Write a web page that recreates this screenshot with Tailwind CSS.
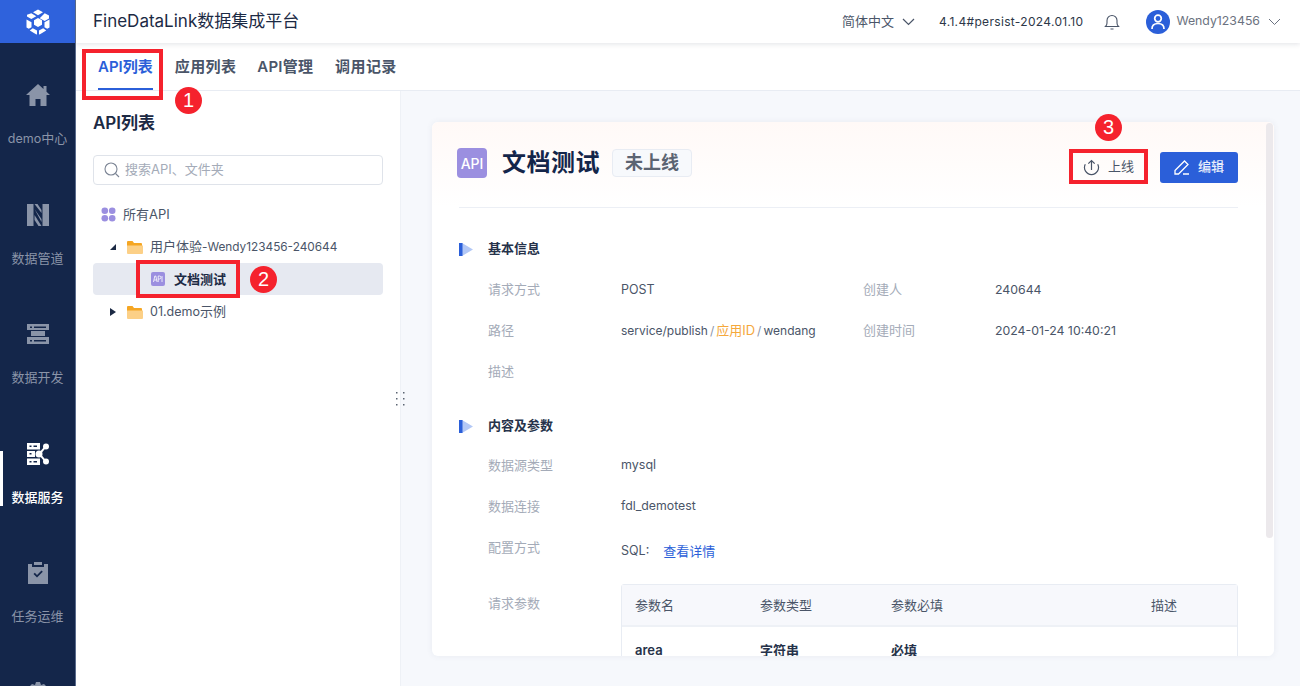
<!DOCTYPE html>
<html lang="zh-CN">
<head>
    <meta charset="UTF-8">
    <title>FineDataLink数据集成平台</title>
    <script src="https://cdn.jsdelivr.net/npm/@tailwindcss/browser@4"></script>
</head>
<body class="h-[686px] w-[1300px] overflow-hidden relative flex bg-[#f6f8fc] text-[#4a5568] font-['Inter','Noto_Sans_CJK_SC',sans-serif]">
    <!-- sidebar -->
    <aside class="w-[76px] h-full shrink-0 bg-[#14264a] border-r border-[#5a6b8c] overflow-hidden">
        <div class="h-[43px] -mr-px bg-[#2f62dc] flex items-center justify-center">
            <svg width="26" height="26" viewBox="0 0 26 26" fill="#fff"><path d="M13 0.500l5 2.800-5 2.900-5-2.900zM6.300 4.300l5 2.900-5 2.900-4.300-2.500V5.800zM19.700 4.300L24 6.600v2.900l-4.300 2.600-5-2.900zM13 9l4 2.300v4.500L13 18l-4-2.200v-4.500zM1.500 10.500l5 2.800v5l-2.700 1.500-2.300-1.300zM24.500 10.500v8l-2.300 1.300-2.700-1.500v-5zM7.800 19.200l4.200 2.400v3.900l-1-.3-6.200-3.600zM18.200 19.200l3 2.400-6.200 3.600-1 .3v-3.900z"/></svg>
        </div>
        <nav class="pt-[41px] text-[13px] leading-5 text-[#8a94a8]">
            <a class="h-[119.500px] flex flex-col items-center">
                <svg width="24" height="22" viewBox="0 0 24 22" fill="#8a94a8"><path d="M12 0L0 11h3.500v11h6v-7h5v7h6V11H24l-3.500-3.200V2h-3v3z"/></svg>
                <span class="mt-[22px]"><span class="text-[12.500px]">demo</span>中心</span>
            </a>
            <a class="h-[119.500px] flex flex-col items-center">
                <svg width="22" height="22" viewBox="0 0 22 22" fill="#8a94a8"><path d="M0 0h6.500v22H0zM15.500 0H22v22h-6.500z"/><path d="M7.500 0h3l4 6v3zM7.500 5l7 10v3zM7.500 11l7 11h-3l-4-6z"/></svg>
                <span class="mt-[22px]">数据管道</span>
            </a>
            <a class="h-[119.500px] flex flex-col items-center">
                <svg width="22" height="22" viewBox="0 0 22 22" fill="#8a94a8"><path d="M0 1h22v6H0zM4 8h14v5H4zM0 14h22v7H0z"/><path d="M3 3.500h2v1.500H3zM7 3.500h12v1.500H7zM3 17h2v1.500H3zM7 17h12v1.500H7z" fill="#14264a"/></svg>
                <span class="mt-[22px]">数据开发</span>
            </a>
            <a class="h-[119.500px] flex flex-col items-center relative text-white font-medium">
                <span class="absolute left-0 top-[8px] w-[3px] h-[55px] bg-white"></span>
                <svg width="22" height="22" viewBox="0 0 22 22" fill="#fff"><path d="M0 0h13v6.500H0zM0 8h8v6H0zM0 15.500h13V22H0z"/><circle cx="19" cy="3.500" r="3"/><circle cx="12" cy="11" r="3.500"/><circle cx="19" cy="18.500" r="3"/><path d="M12 10l6.300-7.500 1.400 1.200-6 7.300 6 7.300-1.400 1.200L12 12z"/><path d="M2.500 2.500h2v1.500h-2zM6.500 2.500h3.500v1.500H6.500zM2.500 10h2v1.500h-2zM2.500 18h2v1.500h-2zM6.500 18h3.500v1.500H6.500z" fill="#14264a"/></svg>
                <span class="mt-[22px]">数据服务</span>
            </a>
            <a class="h-[119.500px] flex flex-col items-center">
                <svg width="20" height="22" viewBox="0 0 20 22" fill="#8a94a8"><path d="M0 2h4v3h12V2h4v20H0zM6 0h8v3H6z"/><path d="M5.500 12l1.300-1.300 2.200 2.200 4.500-4.500 1.300 1.300-5.800 5.800z" fill="#14264a"/></svg>
                <span class="mt-[22px]">任务运维</span>
            </a>
            <a class="h-[119.500px] flex flex-col items-center">
                <svg width="22" height="22" viewBox="0 0 22 22" fill="#8a94a8"><path d="M9 0h4l1 3 3-1 3 3-1 3 3 1v4l-3 1 1 3-3 3-3-1-1 3H9l-1-3-3 1-3-3 1-3-3-1V9l3-1-1-3 3-3 3 1z"/></svg>
            </a>
        </nav>
    </aside>

    <div class="flex-1 flex flex-col min-w-0">
        <!-- top bar -->
        <header class="h-[43px] shrink-0 bg-white shadow-[0_1px_5px_rgba(40,50,80,0.14)] relative z-10 flex items-center pl-[17px] pr-[19px]">
            <h1 class="text-[17px] text-[#1c2a44] font-normal">FineDataLink数据集成平台</h1>
            <div class="ml-auto flex items-center text-[13px]">
                <span class="text-[#4a5568]">简体中文</span>
                <svg class="ml-[8px]" width="13" height="8" viewBox="0 0 13 8" fill="none" stroke="#4a5568" stroke-width="1.200"><path d="M1 1l5.500 5.500L12 1"/></svg>
                <span class="ml-[24px] text-[#2d3748] text-[12px] tracking-[0.33px]">4.1.4#persist-2024.01.10</span>
                <svg class="ml-[21px]" width="16" height="16" viewBox="0 0 16 16" fill="none" stroke="#4a5568" stroke-width="1.100"><path d="M1.500 12.500h13c-1-1-1.500-2-1.500-3.500V6.500a5 5 0 0 0-10 0V9c0 1.500-.5 2.500-1.500 3.500zM6.500 15h3"/></svg>
                <span class="ml-[26px] w-6 h-6 rounded-full bg-[#2b5fd9] flex items-center justify-center">
                    <svg width="16" height="18" viewBox="0 0 16 18" fill="none" stroke="#fff" stroke-width="1.700"><circle cx="8" cy="5.500" r="3.300"/><path d="M2 16c0-3.500 2.500-5.500 6-5.500s6 2 6 5.500"/></svg>
                </span>
                <span class="ml-[6px] text-[12.300px] text-[#6b7280]">Wendy123456</span>
                <svg class="ml-[8px]" width="13" height="8" viewBox="0 0 13 8" fill="none" stroke="#6b7280" stroke-width="1"><path d="M1 1l5.500 5.500L12 1"/></svg>
            </div>
        </header>

        <!-- tabs -->
        <div class="h-[48px] shrink-0 bg-white border-b border-[#e8ecf3] flex pl-[22px] gap-[22px] text-[15px] font-semibold text-[#4a5568]">
            <a class="h-[47px] pt-[14px] leading-5 text-[#2b5fd9] border-b-2 border-[#2b5fd9]">API列表</a>
            <a class="pt-[14px] leading-5 tracking-[0.4px]">应用列表</a>
            <a class="-ml-px pt-[14px] leading-5 tracking-[0.2px]">API管理</a>
            <a class="pt-[14px] leading-5 tracking-[0.4px]">调用记录</a>
        </div>

        <div class="flex-1 flex min-h-0">
            <!-- tree panel -->
            <section class="w-[325px] shrink-0 bg-white border-r border-[#eef1f6] pl-[17px] pr-[17px] relative">
                <h2 class="mt-[20px] text-[17px] leading-6 font-semibold text-[#1c2a44]">API列表</h2>
                <div class="mt-[20px] h-[30px] border border-[#dfe3ea] rounded-[4px] flex items-center pl-[10px] text-[13px] text-[#a4abb8]">
                    <svg width="16" height="16" viewBox="0 0 16 16" fill="none" stroke="#7b8494" stroke-width="1.100"><circle cx="7" cy="7" r="6"/><path d="M11.500 11.500l3.500 3.500"/></svg>
                    <span class="ml-[5px]">搜索API、文件夹</span>
                </div>
                <ul class="mt-[13px] text-[13px] text-[#4a5568]">
                    <li class="h-[33px] flex items-center pl-[8px]">
                        <svg width="15" height="15" viewBox="0 0 15 15" fill="#9b8fe0"><circle cx="3.800" cy="3.800" r="3.300"/><circle cx="11.200" cy="3.800" r="3.300"/><circle cx="3.800" cy="11.200" r="3.300"/><circle cx="11.200" cy="11.200" r="3.300"/></svg>
                        <span class="ml-[7px]">所有API</span>
                    </li>
                    <li class="h-[32px] flex items-center pl-[17px]">
                        <svg width="6" height="6" viewBox="0 0 6 6" fill="#1c2a44"><path d="M6 0v6H0z"/></svg>
                        <svg class="ml-[11px]" width="16" height="14" viewBox="0 0 16 14"><path d="M0 2a1 1 0 0 1 1-1h4.500l1.500 2h7a1 1 0 0 1 1 1v2H0z" fill="#f5a623"/><path d="M0 5.500h16V13a1 1 0 0 1-1 1H1a1 1 0 0 1-1-1z" fill="#fcd087"/></svg>
                        <span class="ml-[7px]">用户体验<span class="text-[11.800px]">-Wendy123456-240644</span></span>
                    </li>
                    <li class="h-[32px] flex items-center pl-[58px] bg-[#e6e9f1] rounded-[4px] font-semibold text-[#1c2a44]">
                        <svg width="14" height="14" viewBox="0 0 14 14"><rect width="14" height="14" rx="2" fill="#9b8fe0"/><path d="M2.500 10l1.300-6h1l1.300 6M3.100 8h2.400M7.200 10V4h1.200a1.400 1.400 0 0 1 0 3H7.200M11 4v6" fill="none" stroke="#fff" stroke-width=".8"/></svg>
                        <span class="ml-[9px] pt-px">文档测试</span>
                    </li>
                    <li class="h-[33px] flex items-center pl-[17px]">
                        <svg width="6" height="8" viewBox="0 0 6 8" fill="#1c2a44"><path d="M0 0l6 4-6 4z"/></svg>
                        <svg class="ml-[11px]" width="16" height="14" viewBox="0 0 16 14"><path d="M0 2a1 1 0 0 1 1-1h4.500l1.500 2h7a1 1 0 0 1 1 1v2H0z" fill="#f5a623"/><path d="M0 5.500h16V13a1 1 0 0 1-1 1H1a1 1 0 0 1-1-1z" fill="#fcd087"/></svg>
                        <span class="ml-[7px]"><span class="text-[12.500px]">01.demo</span>示例</span>
                    </li>
                </ul>
                <svg class="absolute left-[319px] top-[300px]" width="12" height="16" viewBox="0 0 12 16" fill="#5b6472"><rect x="1" y="1" width="1.500" height="1.500"/><rect x="8" y="1" width="1.500" height="1.500"/><rect x="1" y="7" width="1.500" height="1.500"/><rect x="8" y="7" width="1.500" height="1.500"/><rect x="1" y="13" width="1.500" height="1.500"/><rect x="8" y="13" width="1.500" height="1.500"/></svg>
            </section>

            <!-- detail card -->
            <main class="flex-1 min-w-0 pt-[31px] pl-[31px] pr-[26px] pb-[30px]">
                <div class="h-[534px] bg-white rounded-[6px] shadow-[0_0_6px_rgba(60,80,120,0.08)] relative overflow-hidden">
                    <div class="absolute right-[1px] top-[1px] w-[7px] h-[415px] rounded bg-[#ece9ec]"></div>
                    <div class="h-[85px] pl-[25px] pr-[27px] pt-[25px] bg-gradient-to-b from-[#fff9f7] to-white">
                        <div class="flex items-center">
                            <svg width="30" height="30" viewBox="0 0 30 30"><rect width="30" height="30" rx="4" fill="#9b8fe0"/><text x="15" y="21" font-size="14" font-family="Inter" font-weight="500" text-anchor="middle" fill="#fff">API</text></svg>
                            <span class="ml-[15px] text-[24px] leading-8 tracking-[0.5px] font-bold text-[#14264a]">文档测试</span>
                            <span class="ml-[12px] h-[28px] w-[80px] text-center border border-[#e8ecf3] bg-[#f7f9fc] rounded-[4px] text-[18px] leading-[26px] font-semibold text-[#5b6472]">未上线</span>
                            <div class="ml-auto flex items-center mr-[9px] translate-y-[4px]">
                                <a class="h-[31px] w-[76px] flex items-center pl-[14px] text-[13px] text-[#4a5568]">
                                    <svg class="-ml-[4px]" width="17" height="17" viewBox="0 0 17 17" fill="none" stroke="#4a5568" stroke-width="1.200"><path d="M2.300 5.300a7 7 0 1 0 12.400 0M8.500 11V1.500M5.300 4.700l3.200-3.200 3.200 3.200"/></svg>
                                    <span class="ml-[8px]">上线</span>
                                </a>
                                <a class="ml-[11px] h-[31px] w-[78px] bg-[#2b5fd9] rounded-[3px] flex items-center pl-[14px] text-[13px] font-medium text-[#e6ecfb]">
                                    <svg width="16" height="16" viewBox="0 0 16 16" fill="none" stroke="#fff" stroke-width="1.300"><path d="M1 11.500L10.500 2l3.500 3.500L4.500 15H1zM9 15h6"/></svg>
                                    <span class="ml-[8px]">编辑</span>
                                </a>
                            </div>
                        </div>
                    </div>
                    <div class="ml-[27px] mr-[36px] border-t border-[#eceff5]"></div>

                    <div class="pl-[27px] text-[13px] text-[#4a5568]">
                        <div class="mt-[31px] h-5 flex items-center">
                            <svg width="14" height="13" viewBox="0 0 14 13"><path d="M3 0l11 6.500L3 13z" fill="#b3c8f6"/><rect width="3.500" height="13" fill="#2b5fd9"/></svg>
                            <span class="ml-[15px] font-semibold text-[#26324a]">基本信息</span>
                        </div>
                        <div class="mt-[20px] grid grid-cols-[133px_242px_132px_1fr] pl-[29px] leading-5 auto-rows-[41px]">
                            <span class="text-[#a4abb8]">请求方式</span><span class="text-[12.500px] leading-[22px]">POST</span><span class="text-[#a4abb8]">创建人</span><span class="text-[12.300px] leading-[22px]">240644</span>
                            <span class="text-[#a4abb8]">路径</span><span class="text-[12px]">service/publish<span class="text-[#8a94a8] mx-[2px]">/</span><span class="text-[#f5a83c] text-[13px]">应用ID</span><span class="text-[#8a94a8] mx-[2px]">/</span>wendang</span><span class="text-[#a4abb8]">创建时间</span><span class="text-[12.300px] leading-[22px]">2024-01-24 10:40:21</span>
                            <span class="text-[#a4abb8]">描述</span>
                        </div>
                        <div class="mt-[14px] h-5 flex items-center">
                            <svg width="14" height="13" viewBox="0 0 14 13"><path d="M3 0l11 6.500L3 13z" fill="#b3c8f6"/><rect width="3.500" height="13" fill="#2b5fd9"/></svg>
                            <span class="ml-[15px] font-semibold text-[#26324a]">内容及参数</span>
                        </div>
                        <div class="mt-[19px] pl-[29px] leading-5">
                            <div class="h-[41px] flex"><span class="w-[133px] text-[#a4abb8]">数据源类型</span><span class="text-[12.500px]">mysql</span></div>
                            <div class="h-[41px] flex"><span class="w-[133px] text-[#a4abb8]">数据连接</span><span class="text-[12.300px]">fdl_demotest</span></div>
                            <div class="h-[47px] flex"><span class="w-[133px] text-[#a4abb8]">配置方式</span><span class="mt-[4px] text-[12.500px]">SQL:</span><a class="ml-[14px] mt-[4px] text-[#2b5fd9]">查看详情</a></div>
                            <div class="flex">
                                <span class="w-[133px] pt-[9px] text-[#a4abb8]">请求参数</span>
                                <div class="w-[617px] border border-[#e8ecf3] rounded-[3px]">
                                    <div class="h-[42px] bg-[#f7f8fc] border-b-2 border-[#eef1f6] grid grid-cols-[125px_131px_260px_1fr] items-center pl-[13px]"><span>参数名</span><span>参数类型</span><span>参数必填</span><span>描述</span></div>
                                    <div class="h-[46px] grid grid-cols-[125px_131px_260px_1fr] items-center pl-[13px] font-semibold text-[#26324a]"><span>area</span><span>字符串</span><span>必填</span></div>
                                </div>
                            </div>
                        </div>
                    </div>
                </div>
            </main>
        </div>
    </div>

    <!-- red annotations over the screenshot -->
    <div class="absolute left-[82px] top-[49px] w-[81px] h-[51px] border-[4px] border-[#f5222d]"></div>
    <div class="absolute left-[175px] top-[87px] w-[27px] h-[27px] rounded-full bg-[#f5222d] text-white text-[20px] leading-[27px] text-center font-['Liberation_Sans']">1</div>
    <div class="absolute left-[136px] top-[260px] w-[104px] h-[38px] border-[4px] border-[#f5222d]"></div>
    <div class="absolute left-[250px] top-[266px] w-[27px] h-[27px] rounded-full bg-[#f5222d] text-white text-[20px] leading-[27px] text-center font-['Liberation_Sans']">2</div>
    <div class="absolute left-[1069px] top-[149px] w-[79px] h-[35px] border-[4px] border-[#f5222d]"></div>
    <div class="absolute left-[1095px] top-[114px] w-[27px] h-[27px] rounded-full bg-[#f5222d] text-white text-[20px] leading-[27px] text-center font-['Liberation_Sans']">3</div>
</body>
</html>
